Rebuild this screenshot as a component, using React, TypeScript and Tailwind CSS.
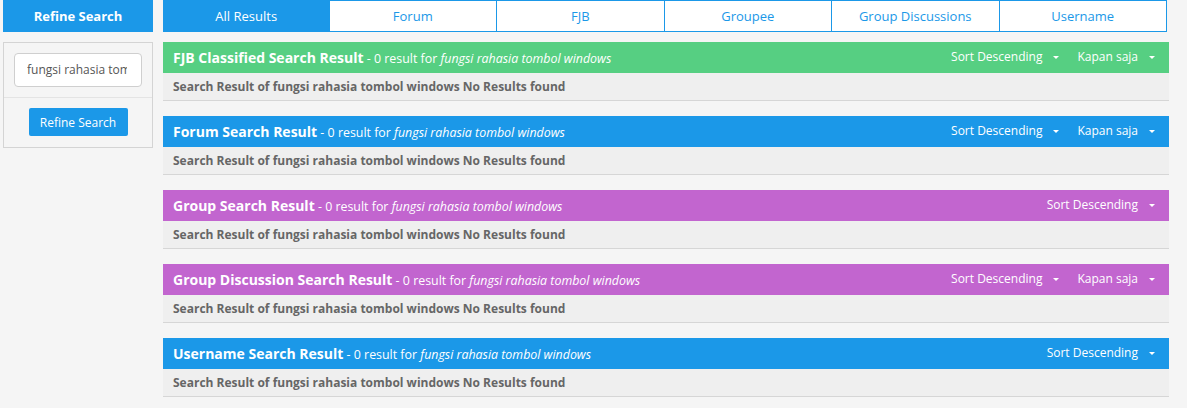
import React from "react";

const Q = "fungsi rahasia tombol windows";

function Caret() {
  return (
    <svg width="6" height="3" viewBox="0 0 6 3" className="ml-[11px] inline-block">
      <path d="M0 0 L6 0 L3 3 Z" fill="#fff" />
    </svg>
  );
}

function Section({ title, color, kapan }: { title: string; color: string; kapan: boolean }) {
  return (
    <div className="mb-[15px]">
      <div className={`flex h-[31px] items-center justify-between pb-[1px] pl-[10px] pr-[14px] text-white ${color}`}>
        <div className="whitespace-nowrap">
          <span className="text-[14px] font-bold">{title}</span>
          <span className="text-[12.4px]"> - 0 result for </span>
          <span className="text-[12.4px] italic">{Q}</span>
        </div>
        <div className="flex items-center text-[12px]">
          <span className="flex items-center">Sort Descending<Caret /></span>
          {kapan && <span className="ml-[18px] flex items-center">Kapan saja<Caret /></span>}
        </div>
      </div>
      <div className="flex h-[28px] items-center border-b border-[#d6d6d6] bg-[#efefef] pl-[10px] text-[12px] font-bold text-[#666]">
        Search Result of {Q} No Results found
      </div>
    </div>
  );
}

export default function App() {
  const tabs = ["Forum", "FJB", "Groupee", "Group Discussions", "Username"];
  return (
    <div
      className="h-[408px] w-[1187px] bg-[#f5f5f5]"
      style={{ fontFamily: '"Open Sans", "Noto Sans", sans-serif' }}
    >
      <div className="flex pl-[3px]">
        <div className="w-[150px] shrink-0">
          <div className="flex h-[32px] items-center justify-center bg-[#1b98e8] pt-[1px] text-[13px] font-bold text-white">
            Refine Search
          </div>
          <div className="mt-[10px] border border-[#d4d4d4]">
            <div className="flex h-[55px] items-center justify-center border-b border-[#e4e4e4]">
              <div className="flex h-[34px] w-[128px] items-center rounded-[4px] border border-[#cfcfcf] bg-white pl-[12px] pr-[14px] text-[12px] text-[#555]">
                <span className="overflow-hidden whitespace-nowrap">fungsi rahasia tombol windows</span>
              </div>
            </div>
            <div className="flex h-[49px] items-start justify-center pt-[10px]">
              <div className="flex h-[28px] w-[99px] items-center justify-center rounded-[2px] bg-[#1b98e8] pt-[1px] text-[12px] text-white">
                Refine Search
              </div>
            </div>
          </div>
        </div>
        <div className="ml-[10px] w-[1006px]">
          <div className="flex h-[32px] w-[1004px]">
            <div className="flex flex-1 items-center justify-center bg-[#1b98e8] pt-[1px] text-[13px] text-white">
              All Results
            </div>
            {tabs.map((t) => (
              <div
                key={t}
                className="flex flex-1 items-center justify-center border-y border-r border-[#1b98e8] bg-white pt-[1px] text-[13px] text-[#1b98e8]"
              >
                {t}
              </div>
            ))}
          </div>
          <div className="mt-[10px]">
            <Section title="FJB Classified Search Result" color="bg-[#56cf82]" kapan />
            <Section title="Forum Search Result" color="bg-[#1b98e8]" kapan />
            <Section title="Group Search Result" color="bg-[#c265cf]" kapan={false} />
            <Section title="Group Discussion Search Result" color="bg-[#c265cf]" kapan />
            <Section title="Username Search Result" color="bg-[#1b98e8]" kapan={false} />
          </div>
        </div>
      </div>
    </div>
  );
}
